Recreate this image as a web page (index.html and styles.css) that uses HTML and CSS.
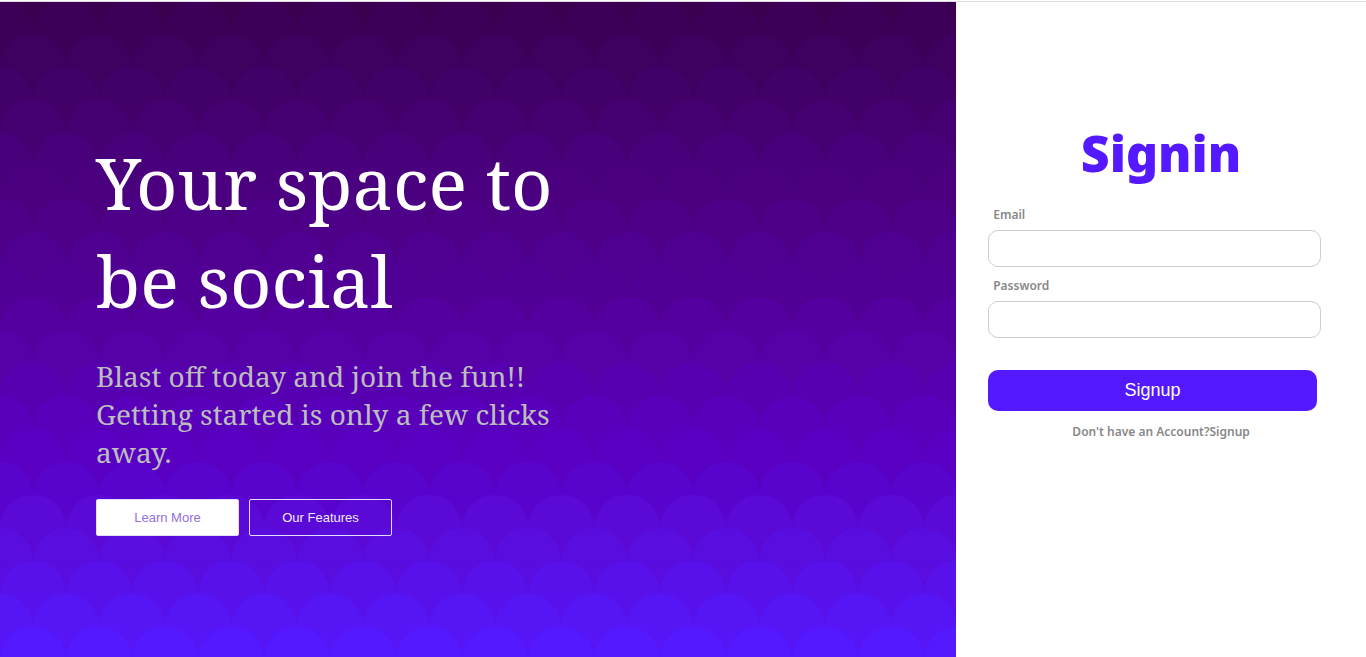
FILE: index.html
```html
<!DOCTYPE html>
<html lang="en">
<head>
<meta charset="utf-8">
<meta name="viewport" content="width=device-width, initial-scale=1">
<title>Signin</title>
<link rel="stylesheet" href="styles.css">
</head>
<body>
<div class="page">
  <section class="hero">
    <svg class="hero-scales" viewBox="0 0 956 655" preserveAspectRatio="xMinYMin slice" aria-hidden="true">
      <defs>
        <pattern id="tile" width="66" height="800" patternUnits="userSpaceOnUse"><path d="M0 33A33 33 0 0 1 66 33V800H0Z" fill="#fff"/></pattern>
        <mask id="edge" maskUnits="userSpaceOnUse" x="-66" y="0" width="1188" height="700"><rect x="-66" width="1188" height="700" fill="url(#tile)"/></mask>
        <g id="row"><rect x="-66" width="1188" height="700" mask="url(#edge)"/></g>
      </defs>
      <rect width="956" height="655" fill="#3b0050"/>
      <use href="#row" x="-33" y="-1" fill="#3d0059"/>
      <use href="#row" y="31.9" fill="#3f0060"/>
      <use href="#row" x="-33" y="64.8" fill="#420069"/>
      <use href="#row" y="97.7" fill="#450071"/>
      <use href="#row" x="-33" y="130.6" fill="#49007b"/>
      <use href="#row" y="163.5" fill="#4b0080"/>
      <use href="#row" x="-33" y="196.4" fill="#4d0088"/>
      <use href="#row" y="229.3" fill="#500090"/>
      <use href="#row" x="-33" y="262.2" fill="#510096"/>
      <use href="#row" y="295.1" fill="#5400a1"/>
      <use href="#row" x="-33" y="328" fill="#5600a8"/>
      <use href="#row" y="360.9" fill="#5700b1"/>
      <use href="#row" x="-33" y="393.8" fill="#5800bb"/>
      <use href="#row" y="426.7" fill="#5900c3"/>
      <use href="#row" x="-33" y="459.6" fill="#5804cc"/>
      <use href="#row" y="492.5" fill="#5a09d6"/>
      <use href="#row" x="-33" y="525.4" fill="#590ddf"/>
      <use href="#row" y="558.3" fill="#5811ea"/>
      <use href="#row" x="-33" y="591.2" fill="#5615f5"/>
      <use href="#row" y="624.1" fill="#5419ff"/>
    </svg>
    <div class="hero-content">
      <h1 class="hero-title">Your space to be social</h1>
      <p class="hero-text">Blast off today and join the fun!! Getting started is only a few clicks away.</p>
      <div class="hero-actions">
        <button class="hero-button hero-button-solid" type="button">Learn More</button>
        <button class="hero-button" type="button">Our Features</button>
      </div>
    </div>
  </section>
  <main class="signin">
    <h2 class="signin-title">Signin</h2>
    <form class="signin-form">
      <label class="signin-label" for="email">Email</label>
      <input class="signin-input" id="email" type="email">
      <label class="signin-label" for="password">Password</label>
      <input class="signin-input" id="password" type="password">
      <button class="signin-button" type="submit">Signup</button>
    </form>
    <p class="signin-note">Don't have an Account?<a class="signin-link" href="#">Signup</a></p>
  </main>
</div>
</body>
</html>
```
FILE: styles.css
```css
* {
  box-sizing: border-box;
}

body {
  margin: 0;
  padding-top: 1px;
  background: #fff;
  font-family: "Segoe UI", "Noto Sans", sans-serif;
}

.page {
  display: grid;
  grid-template-columns: 7fr 3fr;
  min-height: calc(100vh - 1px);
  border-top: 1px solid #dedede;
}

.hero {
  position: relative;
  overflow: hidden;
  background: #5419ff;
  padding: 131px 96px 64px;
}

.hero-scales {
  position: absolute;
  inset: 0;
  width: 100%;
  height: 100%;
}

.hero-content {
  position: relative;
  max-width: 480px;
  font-family: "Noto Serif", "Droid Serif", "Liberation Serif", serif;
}

.hero-title {
  margin: 0;
  color: #fff;
  font-size: 72px;
  font-weight: 400;
  line-height: 98px;
}

.hero-text {
  margin: 28px 0;
  color: #bdbdbd;
  font-size: 28px;
  line-height: 38px;
}

.hero-actions {
  display: flex;
  gap: 10px;
}

.hero-button {
  width: 143px;
  height: 37px;
  border: 1px solid #e6dcf5;
  border-radius: 2px;
  background: transparent;
  color: #f0eafa;
  font: 13px "Liberation Sans", Arial, sans-serif;
}

.hero-button-solid {
  background: #fff;
  color: #9370db;
}

.signin {
  padding: 117px 45px 32px 32px;
}

.signin-title {
  margin: 0;
  padding-left: 13px;
  color: #5419ff;
  font-size: 50px;
  font-weight: 900;
  line-height: 68px;
  text-align: center;
}

.signin-form {
  display: flex;
  flex-direction: column;
  padding-top: 18px;
}

.signin-label {
  padding-left: 5px;
  color: #888;
  font-size: 12px;
  font-weight: 600;
  line-height: 20px;
}

.signin-input {
  width: 100%;
  height: 37px;
  margin: 5px 0 9px;
  padding: 0 12px;
  border: 1px solid #ccc;
  border-radius: 10px;
  background: #fff;
  font-size: 14px;
}

.signin-button {
  height: 41px;
  margin: 23px 4px 0 0;
  border: 0;
  border-radius: 10px;
  background: #5419ff;
  color: #fff;
  font: 18px "Liberation Sans", Arial, sans-serif;
}

.signin-note {
  margin: 11px 0 0;
  padding-left: 13px;
  color: #888;
  font-size: 12px;
  font-weight: 600;
  line-height: 20px;
  text-align: center;
}

.signin-link {
  color: inherit;
  text-decoration: none;
}
```
